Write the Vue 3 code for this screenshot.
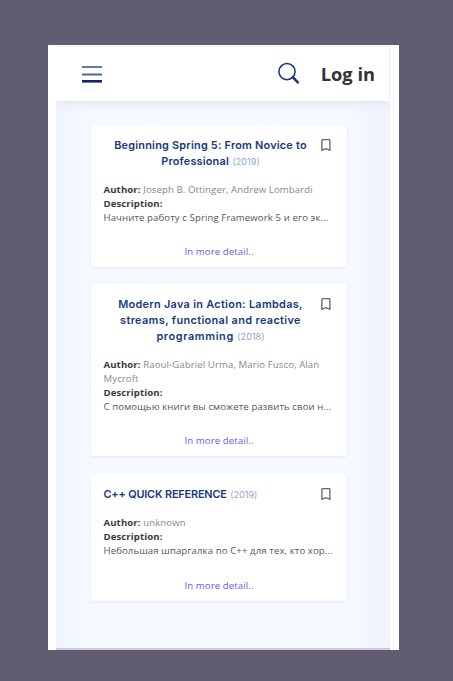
<script setup>
const books = [
  {
    id: 'spring',
    title: [
      { text: 'Beginning Spring 5: From Novice to', spacing: 0.21 },
      { text: 'Professional', spacing: 0.19 },
    ],
    year: 2019,
    authors: ['Joseph B. Ottinger, Andrew Lombardi'],
    description: 'Начните работу с Spring Framework 5 и его эк...',
  },
  {
    id: 'java',
    title: [
      { text: 'Modern Java in Action: Lambdas,', spacing: 0.29 },
      { text: 'streams, functional and reactive', spacing: 0.36 },
      { text: 'programming', spacing: 0.6 },
    ],
    year: 2018,
    authors: ['Raoul-Gabriel Urma, Mario Fusco, Alan', 'Mycroft'],
    description: 'С помощью книги вы сможете развить свои н...',
  },
  {
    id: 'cpp',
    title: [{ text: 'C++ QUICK REFERENCE', spacing: -0.18 }],
    year: 2019,
    authors: ['unknown'],
    description: 'Небольшая шпаргалка по C++ для тех, кто хор...',
  },
]
</script>

<template>
  <div class="page">
    <div class="frame">
      <div class="screen">
        <header class="bar">
          <svg class="menu" width="22" height="20" viewBox="0 0 22 20">
            <rect x="1" y="1" width="20" height="2" fill="#6379ad" />
            <rect x="1" y="8.5" width="20" height="2" fill="#4a66a3" />
            <rect x="1" y="15" width="20" height="2.6" fill="#14246e" />
          </svg>
          <svg class="search" width="24" height="24" viewBox="0 0 24 24" fill="none" stroke="#123478">
            <circle cx="10" cy="9.6" r="8.1" stroke-width="1.5" />
            <path d="M15.8 15.2L20.8 20.3" stroke-width="2.5" stroke-linecap="round" />
          </svg>
          <span class="login">Log in</span>
        </header>
        <main class="list">
          <article v-for="book in books" :key="book.id" class="card">
            <div class="head">
              <h2 class="title">
                <span v-for="(line, i) in book.title" :key="i" class="line">
                  <span :style="{ letterSpacing: line.spacing + 'px' }">{{ line.text }}</span>
                  <span v-if="i === book.title.length - 1" class="year">({{ book.year }})</span>
                </span>
              </h2>
              <svg class="mark" width="12" height="14" viewBox="0 0 12 14" fill="none" stroke="#62626a" stroke-width="1.3">
                <path d="M1.9 12.3V2.4Q1.9 1.6 2.7 1.6H9.1Q9.9 1.6 9.9 2.4V12.3L5.9 10.6Z" />
              </svg>
            </div>
            <div class="info">
              <div><b>Author:</b> <span class="who">{{ book.authors[0] }}</span></div>
              <div v-for="name in book.authors.slice(1)" :key="name" class="who">{{ name }}</div>
              <div><b>Description:</b></div>
              <div class="about">{{ book.description }}</div>
            </div>
            <a class="more">In more detail..</a>
          </article>
        </main>
      </div>
    </div>
  </div>
</template>

<style>
body {
  background: #625c70;
}
</style>

<style scoped>
.page {
  box-sizing: border-box;
  width: 453px;
  height: 681px;
  padding: 45px 54px 31px 48px;
  background: #625c70;
}
.frame {
  box-sizing: border-box;
  height: 605px;
  padding: 1px 9px 0 8px;
  background: #fff;
}
.screen {
  box-sizing: border-box;
  height: 604px;
  overflow: hidden;
  background: linear-gradient(90deg, #f0f5fe, #f6f9ff 30px, #f6f9ff 295px, #f2f5fe 312px);
  border-bottom: 2px solid #c9ccd6;
}
.bar {
  display: flex;
  align-items: center;
  box-sizing: border-box;
  height: 55px;
  padding: 0 14px 0 24.5px;
  background: #fff;
  border-top: 1px solid #ececf0;
  border-right: 1px solid #ececf0;
  box-shadow: 0 2px 10px #dbe3f0;
}
.menu {
  margin-top: 2px;
}
.search {
  margin: 0 20px 0 auto;
}
.login {
  font: 700 18.3px/24px "Open Sans", "Noto Sans", sans-serif;
  color: #323338;
}
.list {
  display: flex;
  flex-direction: column;
  gap: 17.4px;
  padding: 24px 43.5px 0 35px;
}
.card {
  display: flex;
  flex-direction: column;
  box-sizing: border-box;
  padding: 12px 12px 8px 12.5px;
  background: #fff;
  border-radius: 3px;
  box-shadow: 0 1px 3px #e2e7f1;
}
.head {
  display: flex;
  align-items: flex-start;
}
.title {
  flex: 1;
  margin: 0;
  font: 600 10.9px/16px Inter, sans-serif;
  color: #173a7c;
  text-align: center;
  white-space: nowrap;
}
.card:last-child .title {
  text-align: left;
}
.line {
  display: block;
}
.year {
  margin-left: 3.5px;
  font-size: 9.1px;
  font-weight: 400;
  color: #93a5c8;
}
.mark {
  margin: 1px 2.5px 0 2.5px;
}
.info {
  margin-top: 13px;
  font: 400 9.6px/14px "Open Sans", "Noto Sans", sans-serif;
  letter-spacing: 0.1px;
  color: #55565b;
  white-space: nowrap;
}
.info b {
  font-weight: 700;
  color: #3a3b40;
}
.info .who {
  color: #85888e;
}
.more {
  align-self: center;
  margin-top: 20px;
  font: 400 9.6px/14px "Open Sans", "Noto Sans", sans-serif;
  letter-spacing: 0.1px;
  color: #5c60f2;
}
.card:last-child .more {
  margin-top: 21px;
}
</style>
